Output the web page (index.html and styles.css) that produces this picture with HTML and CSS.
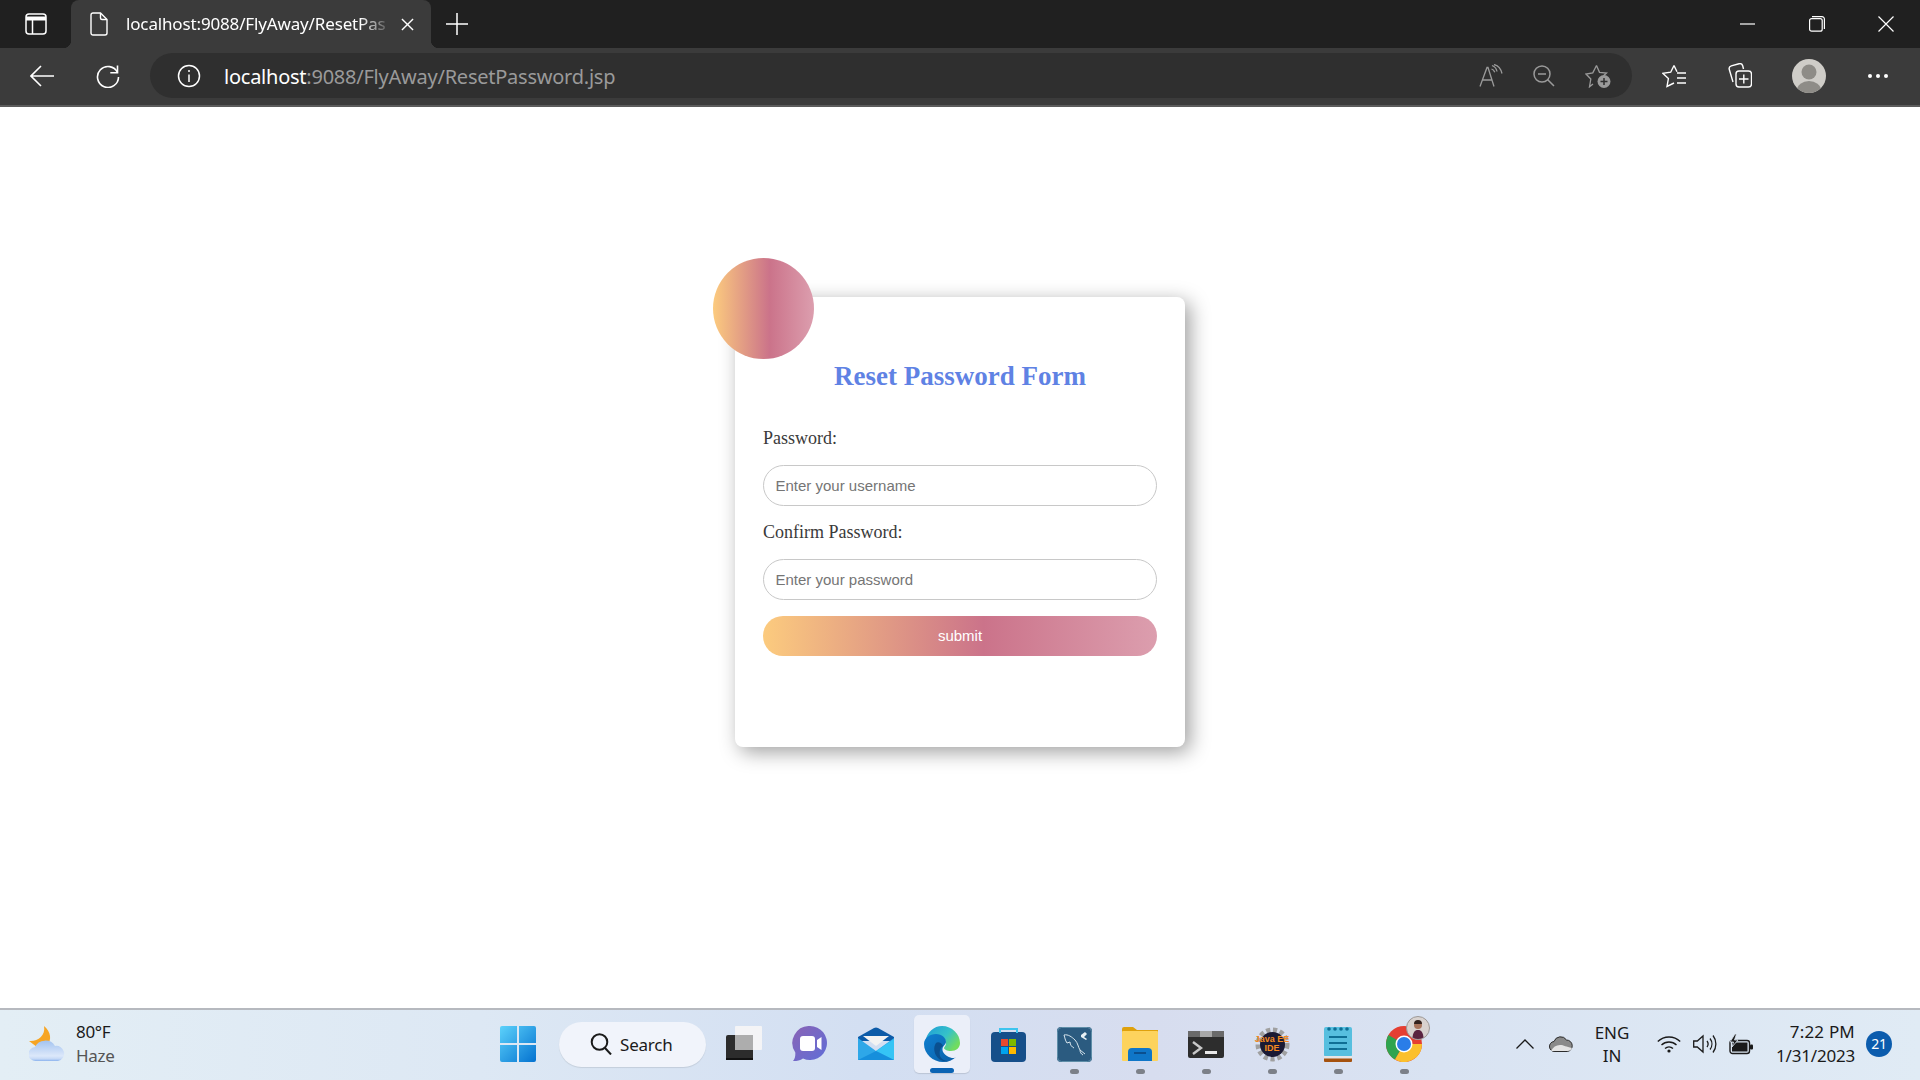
FILE: index.html
```html
<!DOCTYPE html>
<html lang="en">
<head>
<meta charset="utf-8">
<title>Reset Password</title>
<link rel="stylesheet" href="styles.css">
</head>
<body>
<header class="titlebar">
  <div class="tab-actions">
    <svg class="ic-layout" width="22" height="22" viewBox="0 0 22 22" fill="none" stroke="#fff" stroke-width="1.5"><rect x="1" y="1" width="20" height="20" rx="3"/><path d="M1 5.5h20" stroke-width="4"/><path d="M7.5 7v14"/></svg>
  </div>
  <div class="tab">
    <svg width="18" height="24" viewBox="0 0 18 24" fill="none" stroke="#fff" stroke-width="1.4"><path d="M3 1h7.5L17 7.5V21a2 2 0 0 1-2 2H3a2 2 0 0 1-2-2V3a2 2 0 0 1 2-2z"/><path d="M10.5 1v5a1.5 1.5 0 0 0 1.5 1.5h5"/></svg>
    <span class="tab-title">localhost:9088/FlyAway/ResetPas</span>
    <svg class="tab-close" width="13" height="13" viewBox="0 0 14 14" stroke="#fff" stroke-width="1.5"><path d="M1 1l12 12M13 1L1 13"/></svg>
  </div>
  <svg class="new-tab" width="22" height="22" viewBox="0 0 22 22" stroke="#fff" stroke-width="1.5"><path d="M11 0v22M0 11h22"/></svg>
  <div class="window-controls">
    <svg width="16" height="16" viewBox="0 0 16 16" stroke="#fff" stroke-width="1.2"><path d="M0 8h15"/></svg>
    <svg width="16" height="16" viewBox="0 0 16 16" fill="none" stroke="#fff" stroke-width="1.2"><rect x=".6" y="2.6" width="12.6" height="12.6" rx="2"/><path d="M3 .6h10a2.400 2.400 0 0 1 2.400 2.400v10"/></svg>
    <svg width="16" height="16" viewBox="0 0 16 16" stroke="#fff" stroke-width="1.2"><path d="M.5.500l15 15M15.500.500l-15 15"/></svg>
  </div>
</header>

<nav class="toolbar">
  <svg class="tb-back" width="24" height="22" viewBox="0 0 24 22" fill="none" stroke="#fff" stroke-width="1.6"><path d="M24 11H1M11 1L1 11l10 10"/></svg>
  <svg class="tb-reload" width="24" height="24" viewBox="0 0 24 24" fill="none" stroke="#fff" stroke-width="1.6"><path d="M21.500 8.500A10.500 10.500 0 1 0 22.500 13"/><path d="M21.500 1.500v7.200h-7.200"/></svg>
  <div class="address">
    <svg width="24" height="24" viewBox="0 0 24 24" fill="none" stroke="#fff" stroke-width="1.500"><circle cx="12" cy="12" r="10.500"/><path d="M12 10.500V18"/><circle cx="12" cy="7" r="1" fill="#fff" stroke="none"/></svg>
    <span class="url"><span class="url-host">localhost</span>:9088/FlyAway/ResetPassword.jsp</span>
    <div class="address-tools">
      <svg width="24" height="24" viewBox="0 0 24 24" fill="none" stroke="#9a9a9a" stroke-width="1.300"><path d="M1 22.500L8 3.500h1l6 19M3.500 16h10"/><path d="M13 1.500a8 8 0 0 1 5 6M15 .500c4 1 7 4.500 8 9M12.500 5c1.500.5 2.700 1.700 3.300 3.200"/></svg>
      <svg width="22" height="22" viewBox="0 0 22 22" fill="none" stroke="#9a9a9a" stroke-width="1.500"><circle cx="9" cy="9" r="8"/><path d="M5 9h8M14.500 14.500L21 21"/></svg>
      <svg width="26" height="24" viewBox="0 0 26 24" fill="none"><path d="M11.500 1.500l3 6.800 7 .7-3 2.700M8 20l-3.500 2.800 1.300-7.800L1 10l6.800-1.200 3.700-7.300" stroke="#9a9a9a" stroke-width="1.300"/><circle cx="19" cy="17.500" r="6.500" fill="#9a9a9a"/><path d="M19 14v7M15.500 17.500h7" stroke="#2f2f2f" stroke-width="1.500"/></svg>
    </div>
  </div>
  <div class="toolbar-tools">
    <svg width="24" height="24" viewBox="0 0 24 24" fill="none" stroke="#fff" stroke-width="1.400"><path d="M12 1.500l-3.300 6.700L1 9.400l5.400 5.200L5 22.500l7-3.500M12 1.500l3 6.300"/><path d="M15 9h9M15 14h9M15 19h9" /></svg>
    <svg width="24" height="25" viewBox="0 0 24 25" fill="none" stroke="#fff" stroke-width="1.400"><rect x="8" y="8" width="15.500" height="16" rx="3"/><path d="M15.800 11.500v9M11 16h9.500"/><path d="M5 19L1.300 6.500a3 3 0 0 1 2-3.700L11 .8a3 3 0 0 1 3.700 2L15.500 6"/></svg>
    <svg class="avatar" width="34" height="34" viewBox="0 0 34 34"><defs><clipPath id="avc"><circle cx="17" cy="17" r="17"/></clipPath></defs><circle cx="17" cy="17" r="17" fill="#cfcdc8"/><g clip-path="url(#avc)" fill="#8e8c87"><circle cx="17" cy="13" r="7.500"/><ellipse cx="17" cy="31" rx="12" ry="9"/></g></svg>
    <svg class="dots" width="20" height="4" viewBox="0 0 20 4" fill="#fff"><circle cx="2" cy="2" r="2"/><circle cx="10" cy="2" r="2"/><circle cx="18" cy="2" r="2"/></svg>
  </div>
</nav>

<main class="page">
  <section class="card">
    <div class="blob"></div>
    <h2 class="card-title">Reset Password Form</h2>
    <form class="form">
      <label class="field-label" for="pw">Password:</label>
      <input class="field" id="pw" type="text" placeholder="Enter your username">
      <label class="field-label" for="cpw">Confirm Password:</label>
      <input class="field" id="cpw" type="text" placeholder="Enter your password">
      <button class="submit" type="button">submit</button>
    </form>
  </section>
</main>

<footer class="taskbar">
  <div class="weather">
    <svg width="36" height="36" viewBox="0 0 36 36"><defs><linearGradient id="cl" x1="0" y1="0" x2="0" y2="1"><stop offset="0" stop-color="#a3c3f0"/><stop offset=".75" stop-color="#dce8fa"/><stop offset=".9" stop-color="#c4d8f6"/><stop offset="1" stop-color="#8ab2ee"/></linearGradient></defs><path d="M15 0C22 6 23 14 18 19L8 21 0 15C8 16 17 10 15 0z" fill="#f6a524"/><path d="M7 35a7 7 0 0 1-1-14A11 10 0 0 1 26 20a7.500 7.500 0 0 1 3 15z" fill="url(#cl)"/></svg>
    <div class="weather-text"><span>80°F</span><span class="muted">Haze</span></div>
  </div>
  <div class="apps">
    <div class="slot">
      <svg width="36" height="36" viewBox="0 0 36 36"><defs><linearGradient id="win" x1="0" y1="0" x2="1" y2="1"><stop offset="0" stop-color="#5cd2fb"/><stop offset="1" stop-color="#0472d0"/></linearGradient></defs><path d="M0 2a2 2 0 0 1 2-2h15v17H0zM19 0h15a2 2 0 0 1 2 2v15H19zM0 19h17v17H2a2 2 0 0 1-2-2zM19 19h17v15a2 2 0 0 1-2 2H19z" fill="url(#win)"/></svg>
    </div>
    <div class="search">
      <svg width="22" height="22" viewBox="0 0 22 22" fill="none" stroke="#1a1a1a" stroke-width="2"><circle cx="9.500" cy="9" r="7.800"/><path d="M15 15l6 6.500"/></svg>
      <span>Search</span>
    </div>
    <div class="slots">
      <div class="slot">
        <svg width="36" height="36" viewBox="0 0 36 36"><rect x="0" y="9" width="27" height="25" rx="2" fill="#2c2c2c"/><rect x="0" y="32" width="27" height="2" fill="#111"/><rect x="9" y="0" width="27" height="24" rx="1" fill="#f4f4f6"/><rect x="9" y="9" width="18" height="15" fill="#adadad"/></svg>
      </div>
      <div class="slot">
        <svg width="36" height="36" viewBox="0 0 36 36"><defs><linearGradient id="chat" x1="0" y1="0" x2="1" y2="1"><stop offset="0" stop-color="#8a63b5"/><stop offset="1" stop-color="#5f6ed8"/></linearGradient></defs><path d="M18 0a17 17 0 1 1-7 32.500c-3 2-7 2.700-10 2.500 2-2 2.500-5 2.300-8.500A17 17 0 0 1 18 0z" fill="url(#chat)"/><rect x="8" y="10" width="15" height="15" rx="3" fill="#fff"/><path d="M25 14l4.500-3v13L25 21z" fill="#fff"/></svg>
      </div>
      <div class="slot">
        <svg width="36" height="34" viewBox="0 0 36 34"><path d="M0 10L16 1c1.500-.7 2.500-.7 4 0l16 9v4H0z" fill="#0d5ba8"/><path d="M5 9h26l-13 10z" fill="#f3f3f3"/><path d="M0 11l18 13 18-13v22H0z" fill="#2ea7e8"/><path d="M36 12v21L18 24z" fill="#35c4f5"/><path d="M0 33l18-9 18 9z" fill="#168fdc"/></svg>
      </div>
      <div class="slot slot-active">
        <svg width="36" height="36" viewBox="0 0 36 36"><defs><linearGradient id="ed1" x1="0" y1="0" x2="1" y2=".6"><stop offset="0" stop-color="#1e9bd8"/><stop offset=".6" stop-color="#35c1c9"/><stop offset="1" stop-color="#71dc5f"/></linearGradient><linearGradient id="ed2" x1="0" y1="0" x2="1" y2="1"><stop offset="0" stop-color="#0f7fd0"/><stop offset="1" stop-color="#0b5fa8"/></linearGradient></defs><path d="M1 16C3 6 10 0 18 0c10 0 18 8 18 17 0 5-4 8-9 8-4 0-7-1.500-7-3 0-1 2-2 2-5 0-4-5-8-10-7-5 0-9 3-11 6z" fill="url(#ed1)"/><path d="M0 18C0 12 6 8 12 8c6 0 10 4 10 8 0 2-2 3-3 5s-1 6 4 9 8 2 9 1c-3 3-8 5-13 5C9 36 0 28 0 18z" fill="url(#ed2)"/><path d="M12 17c-3 4-2 11 2 15 3 3 8 4 11 3-4 0-8-2-9-5-1-4 0-8 3-10-1-3-5-5-7-3z" fill="#0a4f8f"/></svg>
        <i class="run run-active"></i>
      </div>
      <div class="slot">
        <svg width="35" height="35" viewBox="0 0 35 35"><rect x="0" y="5" width="35" height="30" rx="4" fill="#164f8a"/><path d="M9 6V2h17v4" fill="none" stroke="#3dc4ee" stroke-width="2"/><rect x="10" y="12" width="7" height="7" fill="#e8492d"/><rect x="18" y="12" width="7" height="7" fill="#7fb800"/><rect x="10" y="20" width="7" height="7" fill="#00a3ee"/><rect x="18" y="20" width="7" height="7" fill="#ffb900"/></svg>
      </div>
      <div class="slot">
        <svg width="35" height="35" viewBox="0 0 35 35" fill="none"><rect width="35" height="35" rx="4" fill="#2b5b80"/><rect x=".5" y=".5" width="34" height="34" rx="4" stroke="#5f8ea8"/><path d="M7 8c4-1 8 2 11 5 3 3 3 7 5 10l5 4M7 8c1 3 1 5 3 8l3-1c0 3 2 5 4 6M23 23c0 2 1 4 3 5" stroke="#d8e6ee" stroke-width="1"/><path d="M24 8l4-3 2 2-3 3 3 2-1 1-5-3z" fill="#e8f0f4"/></svg>
        <i class="run"></i>
      </div>
      <div class="slot">
        <svg width="36" height="34" viewBox="0 0 36 34"><path d="M0 2a2 2 0 0 1 2-2h9l4 3h21v6H0z" fill="#dfa10c"/><rect x="0" y="4" width="36" height="30" rx="1" fill="#fdd35d"/><path d="M6 34V25a4 4 0 0 1 4-4h16a4 4 0 0 1 4 4v9z" fill="#0f76c8"/><rect x="12" y="25" width="12" height="2" fill="#0a4f8f"/></svg>
        <i class="run"></i>
      </div>
      <div class="slot">
        <svg width="36" height="27" viewBox="0 0 36 27"><rect width="36" height="27" rx="2" fill="#2d2d2d"/><rect width="36" height="6" fill="#6a6a6a"/><rect x="12" width="12" height="6" fill="#a8a8a8"/><path d="M5 11l8 6-8 6" fill="none" stroke="#c8c8c8" stroke-width="2.400"/><rect x="17" y="20" width="12" height="3" fill="#e8e8e8"/></svg>
        <i class="run"></i>
      </div>
      <div class="slot">
        <svg width="35" height="35" viewBox="0 0 35 35"><circle cx="17.500" cy="17.500" r="14" fill="none" stroke="#a0a0a0" stroke-width="6" stroke-dasharray="4 2.600"/><circle cx="17.500" cy="17.500" r="12.500" fill="#1b1a33"/></svg>
        <span class="ee-text ee-top">Java EE</span>
        <span class="ee-text ee-bottom">IDE</span>
        <i class="run"></i>
      </div>
      <div class="slot">
        <svg width="28" height="36" viewBox="0 0 28 36"><rect x="0" y="1" width="28" height="30" rx="2" fill="#57bfdf"/><rect x="0" y="30" width="28" height="6" rx="1" fill="#a5520f"/><rect x="0" y="30" width="28" height="2.500" fill="#e6e6e6"/><g fill="#0f6f95"><circle cx="5" cy="3" r="1.800"/><circle cx="11" cy="3" r="1.800"/><circle cx="17" cy="3" r="1.800"/><circle cx="23" cy="3" r="1.800"/><rect x="5" y="10" width="18" height="2"/><rect x="5" y="16" width="18" height="2"/><rect x="5" y="22" width="18" height="2"/></g></svg>
        <i class="run"></i>
      </div>
      <div class="slot">
        <svg width="36" height="36" viewBox="0 0 36 36"><circle cx="18" cy="18" r="18" fill="#e53f32"/><path d="M18 18L2.400 9A18 18 0 0 0 9 33.600z" fill="#2fa44f"/><path d="M18 18H36A18 18 0 0 1 9 33.600z" fill="#fbc02d"/><circle cx="18" cy="18" r="8.500" fill="#fff"/><circle cx="18" cy="18" r="7" fill="#2a7de8"/></svg>
        <svg class="chrome-badge" width="24" height="24" viewBox="0 0 24 24"><circle cx="12" cy="12" r="11.500" fill="#d8d2cf" stroke="#9c9896"/><path d="M6.500 21.500c.5-5 2-7.500 5.500-7.500s5 2.500 5.500 7.500a11 11 0 0 1-11 0z" fill="#5a2440"/><circle cx="12" cy="9" r="4" fill="#a8745c"/><path d="M8 8a4 4 0 0 1 8 0z" fill="#33221e"/></svg>
        <i class="run"></i>
      </div>
    </div>
  </div>
  <div class="tray">
    <svg width="18" height="10" viewBox="0 0 18 10" fill="none" stroke="#1a1a1a" stroke-width="1.300"><path d="M.5 9.500L9 1l8.500 8.500"/></svg>
    <svg class="tray-cloud" width="24" height="16" viewBox="0 0 24 16"><path d="M6 15.500a5 5 0 0 1-1-10A7 7 0 0 1 17.500 4 5.800 5.800 0 0 1 18.500 15.500z" fill="#8a8a8a" stroke="#2c2c2c" stroke-width="1"/><path d="M2 15c2-4 5-6 9-6 4 0 6 2 12 3-.5 2-2.500 3-4.500 3z" fill="#e4e4e4"/></svg>
    <div class="lang"><span>ENG</span><span>IN</span></div>
    <div class="tray-icons">
      <svg width="24" height="18" viewBox="0 0 24 18" fill="none" stroke="#1a1a1a" stroke-width="1.400"><path d="M.8 6.500a16 16 0 0 1 22.400 0M4.500 10a11 11 0 0 1 15 0M8 13.500a6 6 0 0 1 8 0"/><circle cx="12" cy="16" r="1.600" fill="#1a1a1a" stroke="none"/></svg>
      <svg width="24" height="20" viewBox="0 0 24 20" fill="none" stroke="#1a1a1a" stroke-width="1.300"><path d="M.7 7h3.600L10 2v16l-5.700-5H.7z"/><path d="M14 7a5 5 0 0 1 0 6M17 4.500a9 9 0 0 1 0 11M20 1.500a14 14 0 0 1 0 17"/></svg>
      <svg width="24" height="21" viewBox="0 0 24 21"><rect x="1" y="6.500" width="19.500" height="13" rx="2.500" fill="none" stroke="#1a1a1a" stroke-width="1.400"/><rect x="3" y="8.500" width="15.500" height="9" fill="#1a1a1a"/><rect x="21" y="10.500" width="3" height="5" rx="1" fill="#1a1a1a"/><path d="M6 0L1 8h3.500L3 13l6-7H5.500L7.500 0z" fill="#1a1a1a" stroke="#e0eaf5" stroke-width=".8"/></svg>
    </div>
    <div class="clock"><span class="clock-time">7:22 PM</span><span>1/31/2023</span></div>
    <span class="badge">21</span>
  </div>
</footer>
</body>
</html>
```

FILE: styles.css
```css
* { box-sizing: border-box; }
html, body { margin: 0; height: 100%; }
body {
  width: 1920px;
  height: 1080px;
  overflow: hidden;
  display: flex;
  flex-direction: column;
  background: #fff;
  font-family: "Noto Sans", "Open Sans", sans-serif;
}
svg { display: block; flex: none; }

/* browser chrome */
.titlebar {
  height: 48px;
  flex: none;
  display: flex;
  align-items: center;
  background: #202020;
}
.tab-actions { width: 71px; padding-left: 25px; }
.tab {
  position: relative;
  width: 360px;
  height: 48px;
  display: flex;
  align-items: center;
  padding-left: 19px;
  background: #3b3b3b;
  border-radius: 8px 8px 0 0;
}
.tab::before, .tab::after {
  content: "";
  position: absolute;
  bottom: 0;
  width: 8px;
  height: 8px;
}
.tab::before { left: -8px; background: radial-gradient(circle at 0 0, #202020 8px, #3b3b3b 8.500px); }
.tab::after { right: -8px; background: radial-gradient(circle at 100% 0, #202020 8px, #3b3b3b 8.500px); }
.tab-title {
  width: 260px;
  margin-left: 18px;
  margin-bottom: 2px;
  white-space: nowrap;
  color: #fff;
  font-size: 17px;
  letter-spacing: -0.15px;
  -webkit-mask-image: linear-gradient(90deg, #000 90%, rgba(0, 0, 0, 0.2) 100%);
  mask-image: linear-gradient(90deg, #000 90%, rgba(0, 0, 0, 0.2) 100%);
}
.tab-close { margin-left: 15px; }
.new-tab { margin-left: 15px; }
.window-controls {
  margin-left: auto;
  display: flex;
  gap: 53px;
  padding-right: 26px;
}
.toolbar {
  height: 59px;
  flex: none;
  display: flex;
  align-items: center;
  background: #3b3b3b;
  border-bottom: 2px solid #5b5b5b;
  padding: 0 32px 2px 30px;
}
.tb-reload { margin-left: 42px; }
.address {
  width: 1482px;
  height: 45px;
  margin-left: 30px;
  display: flex;
  align-items: center;
  padding-left: 27px;
  background: #2f2f2f;
  border-radius: 23px;
}
.url {
  margin-left: 23px;
  margin-top: 2px;
  color: #9a9a9a;
  font-size: 20px;
  letter-spacing: -0.24px;
  white-space: nowrap;
}
.url-host { color: #fff; }
.address-tools {
  margin-left: auto;
  display: flex;
  align-items: center;
  gap: 30px;
  padding-right: 21px;
}
.toolbar-tools {
  display: flex;
  align-items: center;
  margin-left: 30px;
  gap: 42px;
}
.avatar { margin-left: -2px; }

/* page */
.page {
  flex: 1;
  display: flex;
  justify-content: center;
  align-items: flex-start;
  padding-top: 190px;
}
.card {
  position: relative;
  width: 450px;
  height: 450px;
  padding: 64px 28px 0;
  background: #fff;
  border-radius: 8px;
  box-shadow: 5px 5px 20px rgba(0, 0, 0, 0.38);
}
.blob {
  position: absolute;
  left: -22px;
  top: -39px;
  width: 101px;
  height: 101px;
  border-radius: 50%;
  background: linear-gradient(90deg, #fccb7e 0%, #cb738a 56%, #dc9eae 100%);
}
.card-title {
  margin: 0 0 37px;
  font: bold 27px/30px "Liberation Serif", serif;
  color: #5f82e4;
  text-align: center;
}
.form { display: flex; flex-direction: column; }
.field-label {
  display: block;
  font: 18px/20px "Liberation Serif", serif;
  color: #3a3a3a;
  margin-bottom: 17px;
}
.field {
  height: 41px;
  margin-bottom: 16px;
  padding: 0 11.500px;
  border: 1px solid #c8c8c8;
  border-radius: 21px;
  font: 15px "Liberation Sans", sans-serif;
  outline: none;
}
.field::placeholder { color: #757575; opacity: 1; }
.submit {
  height: 40px;
  padding: 0 0 2px;
  border: 0;
  border-radius: 20px;
  color: #fff;
  font: 15px "Liberation Sans", sans-serif;
  background: linear-gradient(90deg, #fccb7e 0%, #cb738a 56%, #dc9eae 100%);
}

/* taskbar */
.taskbar {
  height: 72px;
  flex: none;
  display: flex;
  align-items: center;
  padding-bottom: 2px;
  border-top: 2px solid #b6b9bf;
  background: linear-gradient(90deg, #e3eef5 0%, #dde8f4 25%, #d3dff2 45%, #d7ddef 60%, #d9e3f2 75%, #e0ebf5 100%);
  color: #1a1a1a;
}
.weather {
  width: 485px;
  display: flex;
  align-items: center;
  padding-left: 29px;
  gap: 11px;
}
.weather-text {
  display: flex;
  flex-direction: column;
  font-size: 17px;
  line-height: 24px;
  letter-spacing: -0.3px;
}
.muted { color: #555; }
.apps { display: flex; align-items: center; }
.slots { display: flex; margin-left: 5px; }
.slot {
  position: relative;
  width: 66px;
  height: 58px;
  display: flex;
  align-items: center;
  justify-content: center;
}
.slot-active {
  width: 56px;
  margin: 0 5px;
  background: #ebeff9;
  border-radius: 5px;
  box-shadow: 0 1px 1px rgba(0, 0, 0, 0.12);
}
.run {
  position: absolute;
  left: 50%;
  bottom: -1px;
  width: 9px;
  height: 5px;
  margin-left: -4.500px;
  border-radius: 3px;
  background: #7c8088;
}
.run-active {
  width: 24px;
  margin-left: -12px;
  bottom: 0;
  background: #0a63b4;
}
.search {
  width: 147px;
  height: 45px;
  margin-left: 8px;
  display: flex;
  align-items: center;
  gap: 8px;
  padding-left: 31px;
  border-radius: 23px;
  background: #f1f4fb;
  font-size: 17px;
  letter-spacing: -0.2px;
  box-shadow: 0 1px 1px rgba(0, 0, 0, 0.1);
}
.ee-text {
  position: absolute;
  left: 0;
  right: 0;
  text-align: center;
  font: bold 9px/8px "Liberation Sans", sans-serif;
  color: #f58a1f;
}
.ee-top { top: 20px; }
.ee-bottom { top: 29px; }
.chrome-badge { position: absolute; left: 35px; top: 1px; }
.tray {
  margin-left: auto;
  display: flex;
  align-items: center;
  padding-right: 28px;
}
.tray-cloud { margin-left: 15px; }
.lang {
  width: 36px;
  margin-left: 21px;
  display: flex;
  flex-direction: column;
  align-items: center;
  font-size: 17px;
  line-height: 23px;
}
.tray-icons { display: flex; align-items: center; gap: 12px; margin-left: 27px; }
.clock {
  width: 102px;
  display: flex;
  flex-direction: column;
  align-items: flex-end;
  font-size: 17px;
  line-height: 24px;
  letter-spacing: -0.2px;
}
.clock-time { letter-spacing: 0.2px; }
.badge {
  width: 26px;
  height: 26px;
  margin-left: 11px;
  border-radius: 50%;
  background: #0b5cad;
  color: #fff;
  font-size: 14px;
  line-height: 26px;
  text-align: center;
  letter-spacing: -0.3px;
}
```
